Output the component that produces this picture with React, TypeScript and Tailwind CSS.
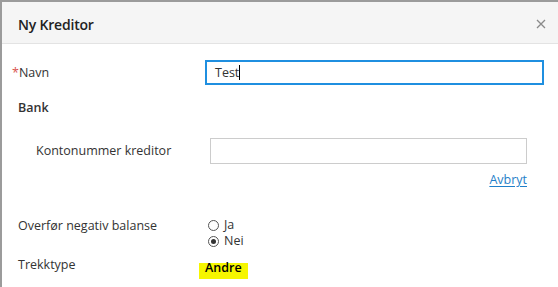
import React from "react";

export default function App() {
  return (
    <div
      className="w-[558px] h-[287px] overflow-hidden bg-white border-t-2 border-l-2 border-[#9b9b9b] text-[#333333]"
      style={{ fontFamily: '"Open Sans", "Noto Sans", sans-serif' }}
    >
      <div className="h-[42px] bg-[#f5f5f5] border-b border-[#e3e3e3] flex items-start justify-between pl-[16px] pr-[12px]">
        <span className="mt-[13px] text-[14px] leading-[20px] font-semibold text-[#222] tracking-[-0.2px]">
          Ny Kreditor
        </span>
        <svg className="mt-[17px]" width="10" height="10" viewBox="0 0 10 10">
          <path d="M1 1 L9 9 M9 1 L1 9" stroke="#8a8a8a" strokeWidth="1.3" fill="none" />
        </svg>
      </div>

      <div className="pt-[16px] text-[12.5px] leading-[18px]">
        <div className="flex items-center h-[25px]">
          <div className="w-[203px] pl-[10px]">
            <span className="text-[#d9534f]">*</span>Navn
          </div>
          <div className="w-[339px] h-[25px] border-2 border-[#1f8fe0] flex items-center pl-[8px]">
            Test<span className="inline-block w-px h-[15px] bg-black" />
          </div>
        </div>

        <div className="pl-[16px] mt-[14px] font-semibold h-[18px]">Bank</div>

        <div className="flex items-center h-[26px] mt-[21px]">
          <div className="w-[208px] pl-[34px]">Kontonummer kreditor</div>
          <div className="w-[317px] h-[26px] border border-[#cccccc]" />
        </div>

        <div className="flex justify-end w-[525px] mt-[7px] h-[18px]">
          <span className="text-[#1f7fc9] underline underline-offset-2">Avbryt</span>
        </div>

        <div className="flex mt-[28px]">
          <div className="w-[206px] pl-[16px]">Overfør negativ balanse</div>
          <div className="flex flex-col leading-[16px]">
            <div className="flex items-center gap-[5px] h-[16px]">
              <span className="w-[11px] h-[11px] rounded-full border border-[#555] bg-white" />
              <span>Ja</span>
            </div>
            <div className="flex items-center gap-[5px] h-[16px]">
              <span className="w-[11px] h-[11px] rounded-full border border-[#555] bg-white flex items-center justify-center">
                <span className="w-[5px] h-[5px] rounded-full bg-[#333]" />
              </span>
              <span>Nei</span>
            </div>
          </div>
        </div>

        <div className="flex mt-[7px]">
          <div className="w-[203px] pl-[16px]">Trekktype</div>
          <span className="relative mt-[3px] font-semibold text-black">
            <span className="absolute left-[-6px] right-[-6px] top-[4px] h-[16px] bg-[#f6f600]" />
            <span className="relative">Andre</span>
          </span>
        </div>
      </div>
    </div>
  );
}
